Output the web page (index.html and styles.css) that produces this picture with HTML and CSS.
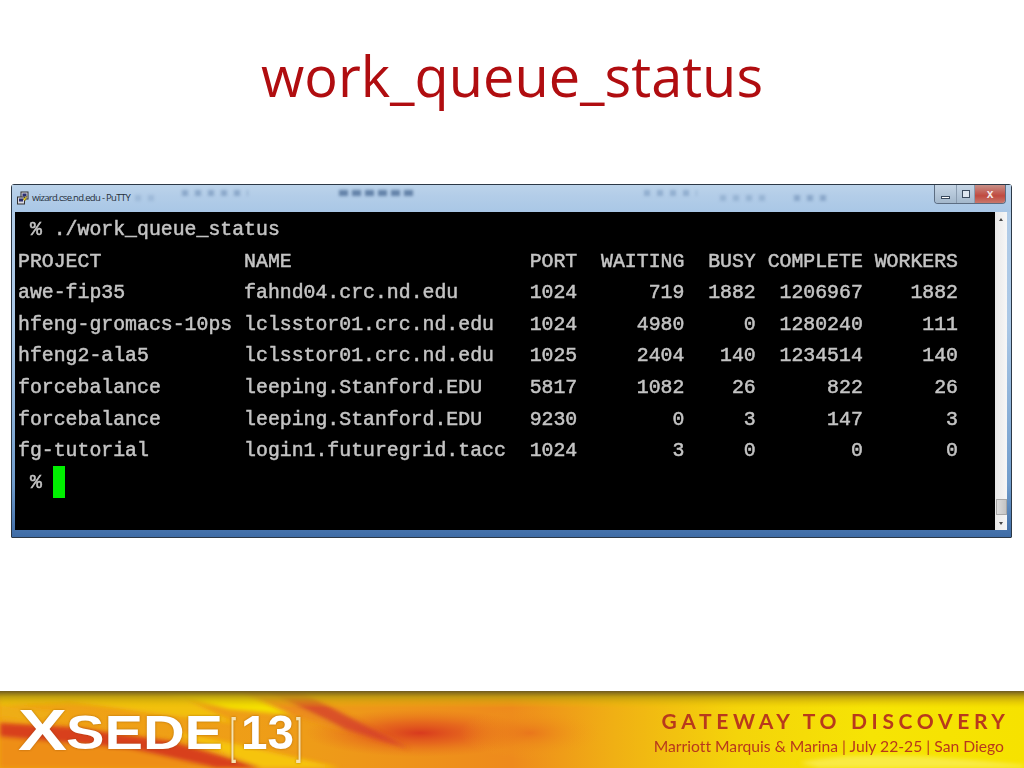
FILE: index.html
```html
<!DOCTYPE html>
<html lang="en">
<head>
<meta charset="utf-8">
<title>work_queue_status</title>
<link rel="stylesheet" href="styles.css">
</head>
<body>
<main class="slide">
  <h1 class="title">work_queue_status</h1>
  <section class="window">
    <header class="titlebar">
      <svg class="app-icon" width="14" height="14" viewBox="0 0 14 14">
        <rect x="5" y="1" width="7" height="7" fill="#d9d9e2" stroke="#333" stroke-width="1"/>
        <rect x="6.5" y="2.5" width="4" height="3" fill="#2a2f70"/>
        <rect x="1.5" y="6" width="7" height="7" fill="#d9d9e2" stroke="#333" stroke-width="1"/>
        <rect x="3" y="7.5" width="4" height="3" fill="#2a2f70"/>
        <path d="M7 8 L11 5 L9 10 Z" fill="#e8d020" stroke="#6a5a10" stroke-width=".5"/>
      </svg>
      <span class="win-title">wizard.cse.nd.edu - PuTTY</span>
      <div class="aero-marks">
        <i class="mark m1"></i><i class="mark m2"></i><i class="mark m3"></i><i class="mark m4"></i><i class="mark m5"></i><i class="mark m6"></i>
      </div>
      <div class="controls">
        <span class="ctl ctl-min"><b></b></span>
        <span class="ctl ctl-max"><b></b></span>
        <span class="ctl ctl-close">x</span>
      </div>
    </header>
    <div class="win-body">
      <pre class="terminal"> % ./work_queue_status
PROJECT            NAME                    PORT  WAITING  BUSY COMPLETE WORKERS
awe-fip35          fahnd04.crc.nd.edu      1024      719  1882  1206967    1882
hfeng-gromacs-10ps lclsstor01.crc.nd.edu   1024     4980     0  1280240     111
hfeng2-ala5        lclsstor01.crc.nd.edu   1025     2404   140  1234514     140
forcebalance       leeping.Stanford.EDU    5817     1082    26      822      26
forcebalance       leeping.Stanford.EDU    9230        0     3      147       3
fg-tutorial        login1.futuregrid.tacc  1024        3     0        0       0
 % <span class="cursor"></span></pre>
      <div class="scrollbar">
        <span class="arrow arrow-up"></span>
        <span class="thumb"></span>
        <span class="arrow arrow-down"></span>
      </div>
    </div>
  </section>
  <footer class="banner">
    <svg class="banner-art" width="1024" height="77" viewBox="0 0 1024 77" preserveAspectRatio="none">
      <defs>
        <linearGradient id="base" x1="0" x2="1" y1="0" y2="0">
          <stop offset="0" stop-color="#f0a414"/>
          <stop offset=".3" stop-color="#ee9c18"/>
          <stop offset=".5" stop-color="#ee8a1c"/>
          <stop offset=".6" stop-color="#f0b014"/>
          <stop offset=".72" stop-color="#f4d40a"/>
          <stop offset=".85" stop-color="#f6e404"/>
          <stop offset="1" stop-color="#f6e200"/>
        </linearGradient>
        <linearGradient id="shade" x1="0" x2="0" y1="0" y2="1">
          <stop offset="0" stop-color="#6e5a20"/>
          <stop offset=".08" stop-color="#b89a10" stop-opacity=".8"/>
          <stop offset=".22" stop-color="#e8c000" stop-opacity="0"/>
        </linearGradient>
        <radialGradient id="glow">
          <stop offset="0" stop-color="#d83a1e"/>
          <stop offset=".45" stop-color="#e2561e" stop-opacity=".7"/>
          <stop offset="1" stop-color="#e8701c" stop-opacity="0"/>
        </radialGradient>
        <radialGradient id="glow2">
          <stop offset="0" stop-color="#e8701c" stop-opacity=".8"/>
          <stop offset="1" stop-color="#f0a018" stop-opacity="0"/>
        </radialGradient>
        <filter id="soft"><feGaussianBlur stdDeviation="2"/></filter>
      </defs>
      <rect width="1024" height="77" fill="url(#base)"/>
      <ellipse cx="420" cy="42" rx="115" ry="24" fill="url(#glow)"/>
      <ellipse cx="530" cy="42" rx="70" ry="26" fill="url(#glow2)"/>
      <g filter="url(#soft)">
        <path d="M0 0 H170 L235 32 L150 22 L70 10 L0 14 Z" fill="#f2c010"/>
        <path d="M160 0 H240 L290 24 L230 18 Z" fill="#f4e000"/>
        <path d="M266 0 H300 L410 58 L345 38 Z" fill="#d4402a" opacity=".8"/>
        <path d="M240 0 H266 L345 40 L300 26 Z" fill="#ec8c1c"/>
        <path d="M0 32 L70 36 L170 50 L262 77 H215 L130 58 L0 46 Z" fill="#d8401f"/>
        <path d="M0 46 L130 58 L215 77 H0 Z" fill="#ee8e18"/>
        <path d="M170 40 L250 56 L340 77 H262 Z" fill="#f6c40c"/>
        <path d="M0 14 L70 22 L30 30 L0 26 Z" fill="#eead14"/>
        <path d="M800 72 Q860 56 1024 74 V77 H820 Z" fill="#fbee60" opacity=".7"/>
      </g>
      <rect width="1024" height="77" fill="url(#shade)"/>
    </svg>
    <svg class="logo" width="320" height="64" viewBox="0 0 320 64" role="img" aria-label="XSEDE[13]">
      <text class="logo-x" x="18" y="49" textLength="49" lengthAdjust="spacingAndGlyphs">X</text>
      <text class="logo-sede" x="66" y="48" textLength="157" lengthAdjust="spacingAndGlyphs">SEDE</text>
      <text class="logo-br" x="230" y="52" textLength="6" lengthAdjust="spacingAndGlyphs">[</text>
      <text class="logo-sede" x="241" y="48" textLength="53" lengthAdjust="spacingAndGlyphs">13</text>
      <text class="logo-br" x="296" y="52" textLength="6" lengthAdjust="spacingAndGlyphs">]</text>
    </svg>
    <div class="tagline">
      <div class="gateway">GATEWAY TO DISCOVERY</div>
      <div class="venue">Marriott Marquis &amp; Marina | July 22-25 | San Diego</div>
    </div>
  </footer>
</main>
</body>
</html>
```

FILE: styles.css
```css
* { box-sizing: border-box; }
html, body { margin: 0; padding: 0; background: #fff; }
.slide {
  width: 1024px;
  height: 768px;
  display: flex;
  flex-direction: column;
  overflow: hidden;
}
.title {
  margin: 0;
  height: 184px;
  padding-top: 37px;
  text-align: center;
  font: 400 55.9px/76px "Open Sans", sans-serif;
  color: #b00d10;
}
.window {
  margin-left: 11px;
  width: 1001px;
  height: 354px;
  display: flex;
  flex-direction: column;
  background: linear-gradient(180deg, #b3cde8 0%, #a9c7e6 40%, #6f9ccc 85%, #3f6ca6 100%);
  border: 1px solid #2c3846;
  border-radius: 3px 3px 1px 1px;
}
.titlebar {
  height: 27px;
  display: flex;
  align-items: center;
  padding: 0 4px 2px 4px;
  gap: 2px;
  background: linear-gradient(180deg, #bcd3ea 0%, #b3cde8 40%, #a9c7e6 100%);
  position: relative;
}
.app-icon { flex: none; }
.win-title {
  flex: none;
  width: 98px;
  font: 400 9.5px/14px "Open Sans", sans-serif;
  letter-spacing: -.68px;
  color: #26303c;
  white-space: nowrap;
}
.aero-marks {
  flex: 1;
  display: flex;
  align-items: center;
  height: 100%;
  padding-left: 3px;
  filter: blur(1.6px);
}
.mark {
  display: block;
  height: 6px;
  margin-bottom: 10px;
  background: repeating-linear-gradient(90deg, #6f8fb6 0 6px, transparent 6px 13px);
}
.m1 { width: 22px; margin-right: 25px; opacity: .3; margin-bottom: 0; }
.m2 { width: 66px; margin-right: 91px; opacity: .6; }
.m3 { width: 76px; margin-right: 229px; opacity: .8; background: repeating-linear-gradient(90deg, #4f6f98 0 9px, transparent 9px 13px); }
.m4 { width: 53px; margin-right: 23px; opacity: .5; }
.m5 { width: 51px; margin-right: 23px; opacity: .4; margin-bottom: 0; }
.m6 { width: 33px; opacity: .6; margin-bottom: 0; }
.controls {
  position: absolute;
  top: 0;
  right: 5px;
  display: flex;
  height: 19px;
  border: 1px solid #5c6d82;
  border-top: 0;
  border-radius: 0 0 4px 4px;
  overflow: hidden;
}
.ctl {
  display: flex;
  align-items: center;
  justify-content: center;
  background: linear-gradient(180deg, #c6d6e6, #a4b8cc);
  border-right: 1px solid #8a9cb0;
}
.ctl-min { width: 22px; }
.ctl-max { width: 18px; }
.ctl-close {
  width: 30px;
  border-right: 0;
  background: linear-gradient(180deg, #c89088, #c04a40 60%, #c8786c);
  color: #f4e8e8;
  font: 700 12px/14px "Liberation Sans", sans-serif;
}
.ctl-min b { width: 9px; height: 3px; margin-top: 6px; background: #fff; border: 1px solid #3a4a5e; }
.ctl-max b { width: 8px; height: 8px; background: #dde6f0; border: 1px solid #3a4a5e; }
.win-body {
  flex: 1;
  min-height: 0;
  display: flex;
  margin: 0 4px 7px 3px;
}
.terminal {
  flex: 1;
  margin: 0;
  padding: 2px 0 0 3px;
  background: #000;
  color: #c4c4c4;
  font: 400 19.83px/31.6px "Liberation Mono", monospace;
  -webkit-text-stroke: .5px #c4c4c4;
  filter: blur(.45px);
  overflow: hidden;
}
.cursor {
  display: inline-block;
  width: 12px;
  height: 32px;
  margin: -1px 0 0 -1px;
  background: #00f000;
  vertical-align: top;
}
.scrollbar {
  width: 12px;
  display: flex;
  flex-direction: column;
  align-items: center;
  background: linear-gradient(90deg, #e8e8e8, #f6f6f6);
}
.arrow { flex: none; width: 0; height: 0; border-left: 2.5px solid transparent; border-right: 2.5px solid transparent; }
.arrow-up { margin-top: 6px; border-bottom: 3px solid #444; }
.arrow-down { margin: 7px 0 5px; border-top: 3px solid #444; }
.thumb {
  margin-top: auto;
  width: 11px;
  height: 16px;
  background: linear-gradient(90deg, #dcdcdc, #c4c4c4);
  border: 1px solid #a8a8a8;
}
.banner {
  position: relative;
  margin-top: auto;
  height: 77px;
  display: flex;
  justify-content: space-between;
  align-items: flex-start;
  padding-right: 19px;
}
.banner-art { position: absolute; inset: 0; }
.logo { position: relative; flex: none; margin-top: 10px; filter: drop-shadow(0 0 1px rgba(120,60,0,.5)); }
.logo text { fill: #fff; font-family: "Liberation Sans", sans-serif; font-weight: 700; }
.logo .logo-x { font-size: 58px; }
.logo .logo-sede { font-size: 48px; }
.logo .logo-br { font-size: 50px; font-weight: 400; fill: #f6e2b0; }
.tagline {
  position: relative;
  text-align: right;
  color: #b8391c;
  font-family: Lato, sans-serif;
  font-variant-ligatures: none;
}
.gateway {
  margin-top: 17px;
  font-size: 21px;
  line-height: 25px;
  font-weight: 700;
  letter-spacing: 4.65px;
  margin-right: -4.65px;
}
.venue {
  font-size: 15.7px;
  line-height: 20px;
  margin-top: 3px;
  margin-right: 1px;
}
```
